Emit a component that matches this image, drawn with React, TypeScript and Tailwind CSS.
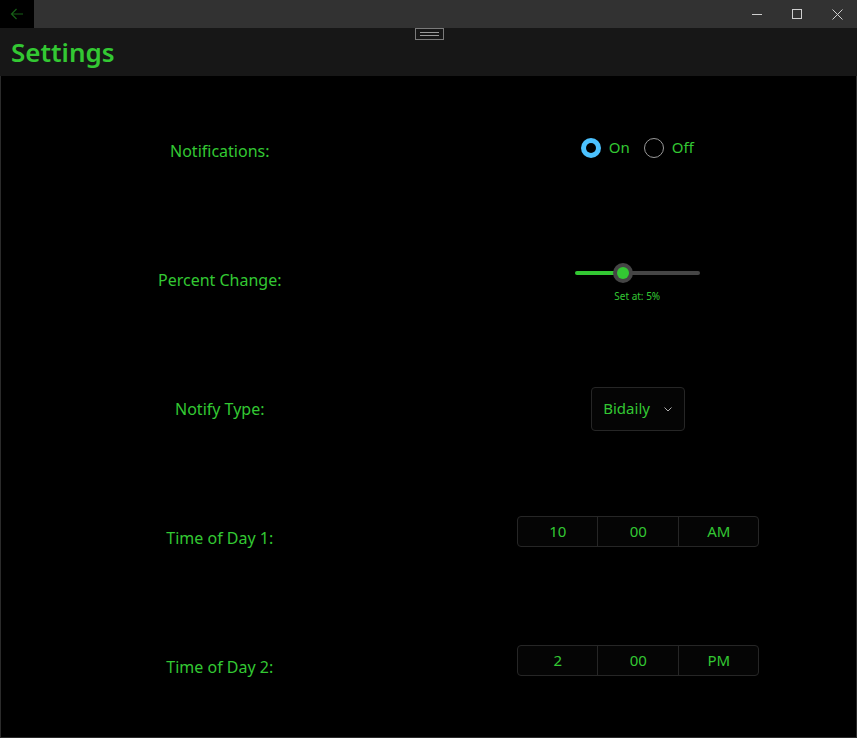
import React from 'react';

const green = 'text-[#33c833]';

function Row({ label, children }: { label: string; children: React.ReactNode }) {
  return (
    <div className="grid h-[129px] grid-cols-2 items-center">
      <div className={`flex justify-center text-[16px] ${green}`}>{label}</div>
      <div className="flex justify-center">{children}</div>
    </div>
  );
}

function TimePicker({ h, m, p }: { h: string; m: string; p: string }) {
  return (
    <div className={`-mt-[12px] ml-[2px] flex h-[31px] w-[242px] rounded-[4px] border border-[#262626] bg-[#050505] text-[15px] ${green}`}>
      <div className="flex w-[80px] items-center justify-center border-r border-[#262626]">{h}</div>
      <div className="flex w-[81px] items-center justify-center border-r border-[#262626]">{m}</div>
      <div className="flex flex-1 items-center justify-center">{p}</div>
    </div>
  );
}

export default function App() {
  return (
    <div className="relative h-[738px] w-[857px] overflow-hidden bg-black font-['Noto_Sans',sans-serif]">
      {/* title bar */}
      <div className="flex h-[28px] items-center bg-[#323232]">
        <div className="flex h-[28px] w-[34px] items-center justify-center bg-black">
          <svg width="14" height="14" viewBox="0 0 14 14" fill="none" stroke="#166016" strokeWidth="1.2">
            <path d="M13 7H1.5M6.5 2L1.5 7l5 5" />
          </svg>
        </div>
        <div className="flex-1" />
        <div className="flex h-[28px] items-center text-[#cfcfcf]">
          <div className="flex w-[40px] justify-center">
            <svg width="10" height="10" viewBox="0 0 10 10" stroke="currentColor" strokeWidth="1"><path d="M0 5.5h10" /></svg>
          </div>
          <div className="flex w-[40px] justify-center">
            <svg width="10" height="10" viewBox="0 0 10 10" fill="none" stroke="currentColor" strokeWidth="1"><rect x="0.5" y="0.5" width="9" height="9" /></svg>
          </div>
          <div className="flex w-[40px] justify-center">
            <svg width="11" height="11" viewBox="0 0 11 11" stroke="currentColor" strokeWidth="1"><path d="M0.5 0.5l10 10M10.5 0.5l-10 10" /></svg>
          </div>
        </div>
      </div>

      {/* header */}
      <div className="relative flex h-[48px] items-center bg-[#171717] px-[11px]">
        <h1 className={`text-[26px] font-semibold leading-none ${green}`}>Settings</h1>
        <div className="absolute left-[415px] top-0 flex h-[12px] w-[29px] flex-col items-center justify-center gap-[2px] border border-[#7a7a7a]">
          <div className="h-px w-[19px] bg-[#9a9a9a]" />
          <div className="h-px w-[19px] bg-[#9a9a9a]" />
        </div>
      </div>

      {/* content */}
      <div className="h-[662px] border-x border-b border-[#2b2b2b] px-[10px] pt-[10px]">
        <Row label="Notifications:">
          <div className={`-mt-[6px] flex items-center text-[15px] ${green}`}>
            <div className="flex items-center">
              <div className="flex h-[20px] w-[20px] items-center justify-center rounded-full bg-[#4cc2ff]">
                <div className="h-[10px] w-[10px] rounded-full bg-black" />
              </div>
              <span className="ml-[8px]">On</span>
            </div>
            <div className="ml-[14px] flex items-center">
              <div className="h-[20px] w-[20px] rounded-full border border-[#9a9a9a]" />
              <span className="ml-[8px]">Off</span>
            </div>
          </div>
        </Row>
        <Row label="Percent Change:">
          <div className="mt-[7px] flex flex-col items-center">
            <div className="relative flex h-[20px] w-[125px] items-center">
              <div className="h-[4px] w-[48px] rounded-l-full bg-[#33c833]" />
              <div className="h-[4px] flex-1 rounded-r-full bg-[#454545]" />
              <div className="absolute left-[38px] top-0 flex h-[20px] w-[20px] items-center justify-center rounded-full bg-[#454545]">
                <div className="h-[12px] w-[12px] rounded-full bg-[#33c833]" />
              </div>
            </div>
            <div className={`mt-[6px] text-[10px] ${green}`}>Set at: 5%</div>
          </div>
        </Row>
        <Row label="Notify Type:">
          <div className={`ml-[2px] flex h-[44px] w-[94px] items-center rounded-[4px] border border-[#262626] bg-[#050505] pl-[11px] text-[15px] ${green}`}>
            <span>Bidaily</span>
            <svg className="ml-[13px]" width="10" height="10" viewBox="0 0 10 10" fill="none" stroke="#b0b0b0" strokeWidth="1"><path d="M1.5 3.5L5 7l3.5-3.5" /></svg>
          </div>
        </Row>
        <Row label="Time of Day 1:">
          <TimePicker h="10" m="00" p="AM" />
        </Row>
        <Row label="Time of Day 2:">
          <TimePicker h="2" m="00" p="PM" />
        </Row>
      </div>
    </div>
  );
}
